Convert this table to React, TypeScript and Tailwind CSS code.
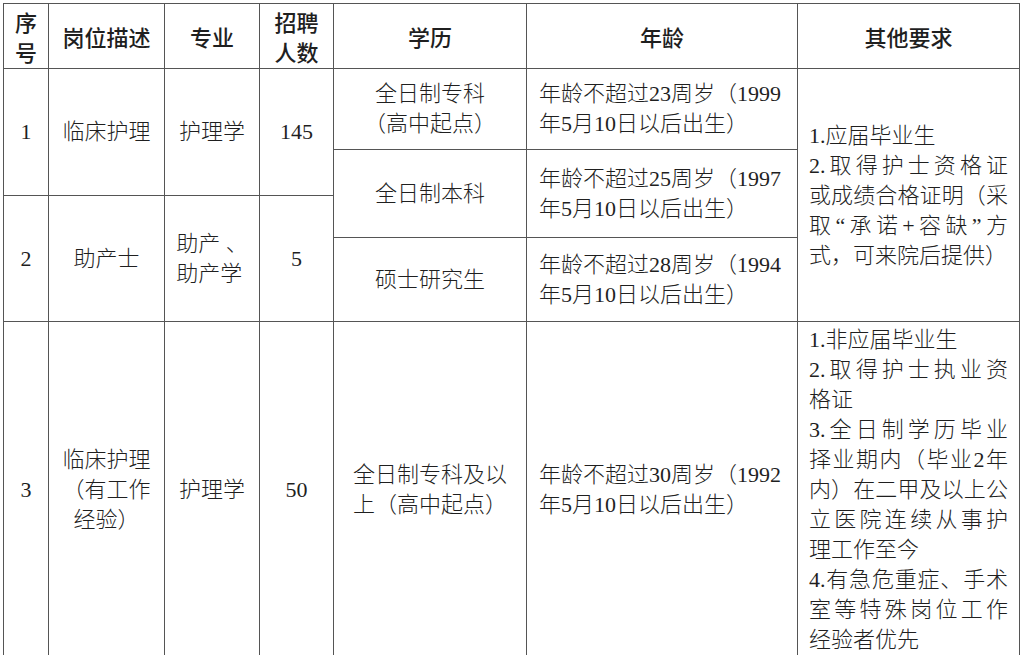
const cell = "flex items-center justify-center border-r border-b border-[#555]"
const head = `${cell} font-medium`
const headFont = { fontFamily: '"Noto Sans CJK SC", sans-serif' }

function Lines({ lines, className = "" }: { lines: string[]; className?: string }) {
  return (
    <div className={className}>
      {lines.map((l, i) => (
        <div key={i} className="whitespace-nowrap">
          {l}
        </div>
      ))}
    </div>
  )
}

// justified block: every line except paragraph ends is stretched to full width
function Justified({ lines }: { lines: [string, boolean][] }) {
  return (
    <div className="w-full">
      {lines.map(([l, stretch], i) => (
        <div key={i} className={stretch ? "text-justify [text-align-last:justify] whitespace-nowrap" : "whitespace-nowrap"}>
          {l}
        </div>
      ))}
    </div>
  )
}

export default function App() {
  return (
    <div className="min-h-[655px] bg-white pl-[3px] pt-[3px] text-[#1f1f1f]">
      <div
        className="grid grid-cols-[45px_116px_95px_74px_193px_271px_222px] grid-rows-[65px_81px_46px_42px_84px_336px] w-max border-l border-t border-[#555] text-[22px] leading-[30px] font-light"
        style={{ fontFamily: '"Liberation Serif", "Noto Sans CJK SC", serif' }}
      >
        {/* header */}
        <div className={`${head} col-start-1 row-start-1`} style={headFont}>
          <Lines lines={["序", "号"]} className="text-center" />
        </div>
        <div className={`${head} col-start-2 row-start-1`} style={headFont}>
          岗位描述
        </div>
        <div className={`${head} col-start-3 row-start-1`} style={headFont}>
          专业
        </div>
        <div className={`${head} col-start-4 row-start-1`} style={headFont}>
          <Lines lines={["招聘", "人数"]} className="text-center" />
        </div>
        <div className={`${head} col-start-5 row-start-1`} style={headFont}>
          学历
        </div>
        <div className={`${head} col-start-6 row-start-1`} style={headFont}>
          年龄
        </div>
        <div className={`${head} col-start-7 row-start-1`} style={headFont}>
          其他要求
        </div>

        {/* row 1 */}
        <div className={`${cell} col-start-1 row-start-2 row-span-2`}>1</div>
        <div className={`${cell} col-start-2 row-start-2 row-span-2`}>临床护理</div>
        <div className={`${cell} col-start-3 row-start-2 row-span-2`}>护理学</div>
        <div className={`${cell} col-start-4 row-start-2 row-span-2`}>145</div>
        <div className={`${cell} col-start-5 row-start-2`}>
          <Lines lines={["全日制专科", "（高中起点）"]} className="text-center" />
        </div>
        <div className={`${cell} col-start-6 row-start-2 justify-start pl-3`}>
          <Lines lines={["年龄不超过23周岁（1999", "年5月10日以后出生）"]} />
        </div>
        <div className={`${cell} col-start-7 row-start-2 row-span-4 px-[11px] pt-[2px]`}>
          <Justified
            lines={[
              ["1.应届毕业生", false],
              ["2.取得护士资格证", true],
              ["或成绩合格证明（采", true],
              ["取“承诺+容缺”方", true],
              ["式，可来院后提供）", false],
            ]}
          />
        </div>
        <div className={`${cell} col-start-5 row-start-3 row-span-2`}>全日制本科</div>
        <div className={`${cell} col-start-6 row-start-3 row-span-2 justify-start pl-3`}>
          <Lines lines={["年龄不超过25周岁（1997", "年5月10日以后出生）"]} />
        </div>

        {/* row 2 */}
        <div className={`${cell} col-start-1 row-start-4 row-span-2`}>2</div>
        <div className={`${cell} col-start-2 row-start-4 row-span-2`}>助产士</div>
        <div className={`${cell} col-start-3 row-start-4 row-span-2`}>
          <Lines lines={["助产 、", "助产学"]} className="text-left" />
        </div>
        <div className={`${cell} col-start-4 row-start-4 row-span-2`}>5</div>
        <div className={`${cell} col-start-5 row-start-5`}>硕士研究生</div>
        <div className={`${cell} col-start-6 row-start-5 justify-start pl-3`}>
          <Lines lines={["年龄不超过28周岁（1994", "年5月10日以后出生）"]} />
        </div>

        {/* row 3 */}
        <div className={`${cell} col-start-1 row-start-6`}>3</div>
        <div className={`${cell} col-start-2 row-start-6`}>
          <Lines lines={["临床护理", "（有工作", "经验）"]} className="text-center" />
        </div>
        <div className={`${cell} col-start-3 row-start-6`}>护理学</div>
        <div className={`${cell} col-start-4 row-start-6`}>50</div>
        <div className={`${cell} col-start-5 row-start-6`}>
          <Lines lines={["全日制专科及以", "上（高中起点）"]} className="text-left" />
        </div>
        <div className={`${cell} col-start-6 row-start-6 justify-start pl-3`}>
          <Lines lines={["年龄不超过30周岁（1992", "年5月10日以后出生）"]} />
        </div>
        <div className={`${cell} col-start-7 row-start-6 px-[11px]`}>
          <Justified
            lines={[
              ["1.非应届毕业生", false],
              ["2.取得护士执业资", true],
              ["格证", false],
              ["3.全日制学历毕业", true],
              ["择业期内（毕业2年", true],
              ["内）在二甲及以上公", true],
              ["立医院连续从事护", true],
              ["理工作至今", false],
              ["4.有急危重症、手术", true],
              ["室等特殊岗位工作", true],
              ["经验者优先", false],
            ]}
          />
        </div>
      </div>
    </div>
  )
}
